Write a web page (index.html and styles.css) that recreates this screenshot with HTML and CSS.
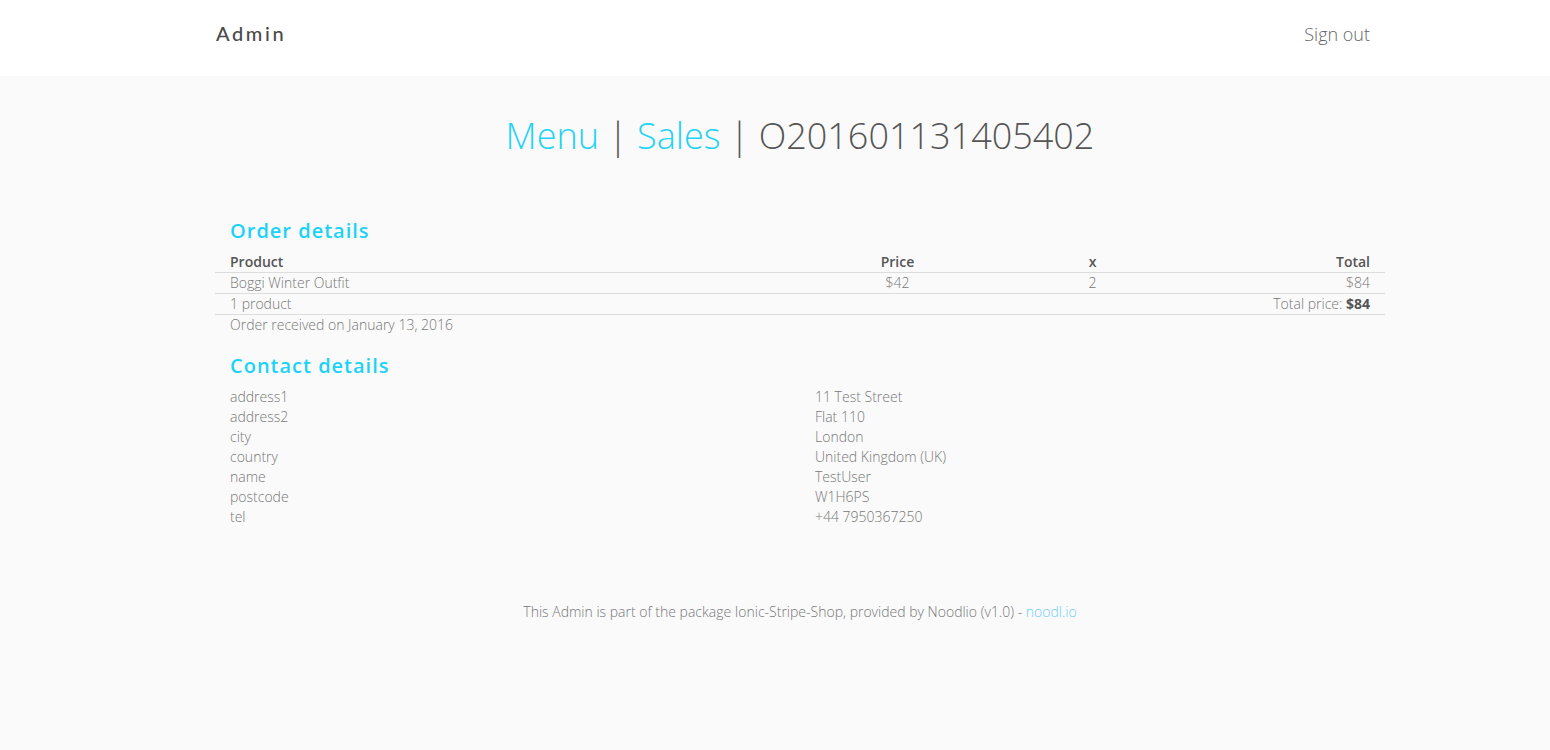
FILE: index.html
```html
<!DOCTYPE html>
<html>
<head>
<meta charset="utf-8">
<title>Admin</title>
<link rel="stylesheet" href="styles.css">
</head>
<body>
<div class="page">
  <header class="navbar">
    <div class="container nav-inner">
      <a class="brand">Admin</a>
      <a class="signout">Sign out</a>
    </div>
  </header>
  <main class="container">
    <h1 class="title"><a class="crumb">Menu</a> | <a class="crumb">Sales</a> | O201601131405402</h1>

    <h3 class="section">Order details</h3>
    <div class="trow thead">
      <div class="c-prod">Product</div>
      <div class="c-price">Price</div>
      <div class="c-qty">x</div>
      <div class="c-total">Total</div>
    </div>
    <div class="trow">
      <div class="c-prod">Boggi Winter Outfit</div>
      <div class="c-price">$42</div>
      <div class="c-qty">2</div>
      <div class="c-total">$84</div>
    </div>
    <div class="trow">
      <div class="c-prod">1 product</div>
      <div class="c-sum">Total price: <b>$84</b></div>
    </div>
    <div class="received">Order received on January 13, 2016</div>

    <h3 class="section section-2">Contact details</h3>
    <div class="contact">
      <div class="ck">address1</div><div class="cv">11 Test Street</div>
      <div class="ck">address2</div><div class="cv">Flat 110</div>
      <div class="ck">city</div><div class="cv">London</div>
      <div class="ck">country</div><div class="cv">United Kingdom (UK)</div>
      <div class="ck">name</div><div class="cv">TestUser</div>
      <div class="ck">postcode</div><div class="cv">W1H6PS</div>
      <div class="ck">tel</div><div class="cv">+44 7950367250</div>
    </div>

    <footer class="footer">This Admin is part of the package Ionic-Stripe-Shop, provided by Noodlio (v1.0) - <a class="flink">noodl.io</a></footer>
  </main>
</div>
</body>
</html>
```

FILE: styles.css
```css
html, body {
  margin: 0;
  padding: 0;
  overflow: hidden;
}
body {
  background: #fafafa;
  font-family: "Open Sans", "Liberation Sans", sans-serif;
  font-weight: 300;
  font-size: 14px;
  line-height: 20px;
  color: #777;
}
.page {
  width: 1600px;
  min-height: 750px;
}
.container {
  width: 1170px;
  margin: 0 auto;
  box-sizing: border-box;
}
.navbar {
  background: #fff;
  height: 76px;
}
.nav-inner {
  display: flex;
  justify-content: space-between;
  align-items: center;
  height: 76px;
  padding: 0 15px 10px 0;
}
.brand {
  font-family: "Lato", "Open Sans", sans-serif;
  font-weight: 500;
  font-size: 20px;
  letter-spacing: 2.6px;
  color: #4a4a4a;
  padding-left: 1px;
}
.signout {
  font-size: 18px;
  color: #666;
  margin-top: 1px;
}
.title {
  margin: 38px 0 0;
  text-align: center;
  font-weight: 300;
  font-size: 36px;
  line-height: 44px;
  color: #555;
}
.crumb {
  color: #1fd3f7;
}
.section {
  margin: 61px 0 9px;
  padding-left: 15px;
  font-size: 20px;
  line-height: 24px;
  font-weight: 600;
  letter-spacing: 1px;
  color: #1ad3f7;
}
.section-2 {
  margin-top: 19px;
  margin-bottom: 9px;
}
.trow {
  display: grid;
  grid-template-columns: 585px 195px 195px 195px;
  border-bottom: 1px solid #ddd;
}
.trow > div {
  padding: 0 15px;
}
.thead {
  font-weight: 600;
  color: #555;
}
.c-price, .c-qty {
  text-align: center;
}
.c-total {
  text-align: right;
}
.c-sum {
  grid-column: 2 / 5;
  text-align: right;
}
.c-sum b {
  font-weight: 700;
  color: #555;
}
.received {
  padding-left: 15px;
}
.contact {
  display: grid;
  grid-template-columns: 585px 585px;
}
.contact > div {
  padding: 0 15px;
}
.footer {
  margin-top: 75px;
  text-align: center;
}
.flink {
  color: #6dcff6;
}
```
